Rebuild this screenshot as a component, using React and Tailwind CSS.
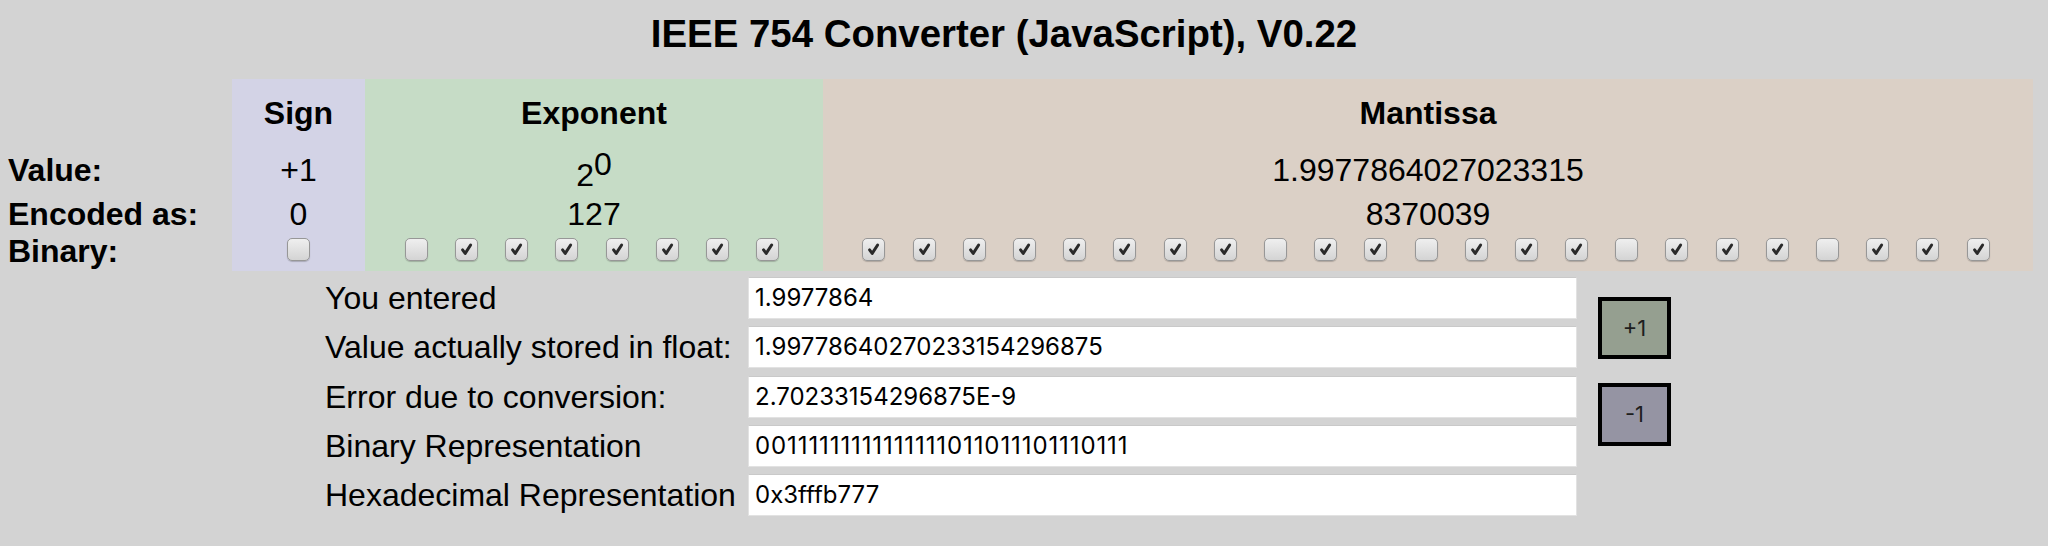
import React from "react";

const SIGN = "0";
const EXPONENT = "01111111";
const MANTISSA = "11111111011011101110111";

// Aqua-style checkbox, as drawn by the browser in the reference
function Bit({ on }) {
  return (
    <span className="inline-flex h-[23px] w-[23px] shrink-0 items-center justify-center rounded-[5px] border border-[#979797] bg-linear-to-b from-[#efefef] to-[#d4d4d4] shadow-[0_1px_1px_rgba(0,0,0,0.2)]">
      {on && (
        <svg viewBox="0 0 16 16" className="h-[15px] w-[15px]">
          <path
            d="M3.8 8.4 L6.6 12.2 L12.4 3.2"
            fill="none"
            stroke="#2a2a2a"
            strokeWidth="3.2"
            strokeLinecap="round"
            strokeLinejoin="round"
          />
        </svg>
      )}
    </span>
  );
}

function Bits({ value }) {
  return (
    <div className="flex h-full items-center justify-center gap-[27.2px]">
      {value.split("").map((b, i) => (
        <Bit key={i} on={b === "1"} />
      ))}
    </div>
  );
}

const rows = [
  ["You entered", "1.9977864", ""],
  ["Value actually stored in float:", "1.99778640270233154296875", ""],
  ["Error due to conversion:", "2.70233154296875E-9", ""],
  ["Binary Representation", "00111111111111111011011101110111", "tracking-[0.9px]"],
  ["Hexadecimal Representation", "0x3fffb777", ""],
];

export default function App() {
  return (
    <div className="min-h-screen bg-[#d3d3d3] font-['Liberation_Sans',Arial,sans-serif] text-black">
      {/* Title */}
      <h1 className="pt-[12px] pr-[40px] text-center text-[38.4px] font-bold leading-[44px]">
        IEEE 754 Converter (JavaScript), V0.22
      </h1>

      {/* Bit table */}
      <div className="mt-[23px] ml-[8px] grid grid-cols-[224px_133px_458px_1210px] text-[32px] leading-[37px]">
        {/* header */}
        <div className="h-[58px]" />
        <div className="h-[58px] bg-[#d3d3e6] pt-[16px] text-center font-bold">Sign</div>
        <div className="h-[58px] bg-[#c6dcc6] pt-[16px] text-center font-bold">Exponent</div>
        <div className="h-[58px] bg-[#dbd0c6] pt-[16px] text-center font-bold">Mantissa</div>

        {/* value */}
        <div className="h-[57px] pt-[15px] font-bold">Value:</div>
        <div className="h-[57px] bg-[#d3d3e6] pt-[15px] text-center">+1</div>
        <div className="h-[57px] bg-[#c6dcc6] pt-[15px] text-center">
          <span className="relative top-[5px]">
            2<sup className="relative -top-[11px] text-[32px]">0</sup>
          </span>
        </div>
        <div className="h-[57px] bg-[#dbd0c6] pt-[15px] text-center">1.9977864027023315</div>

        {/* encoded */}
        <div className="h-[37px] pt-[2px] font-bold">Encoded as:</div>
        <div className="h-[37px] bg-[#d3d3e6] pt-[2px] text-center">0</div>
        <div className="h-[37px] bg-[#c6dcc6] pt-[2px] text-center">127</div>
        <div className="h-[37px] bg-[#dbd0c6] pt-[2px] text-center">8370039</div>

        {/* binary */}
        <div className="h-[40px] pt-[2px] font-bold">Binary:</div>
        <div className="h-[40px] bg-[#d3d3e6] pb-[3px]">
          <Bits value={SIGN} />
        </div>
        <div className="h-[40px] bg-[#c6dcc6] pb-[3px] pr-[4px]">
          <Bits value={EXPONENT} />
        </div>
        <div className="h-[40px] bg-[#dbd0c6] pb-[3px] pr-[4px]">
          <Bits value={MANTISSA} />
        </div>
      </div>

      {/* Results */}
      <div className="mt-[6px] flex pl-[325px]">
        <div className="flex flex-col gap-[7.25px]">
          {rows.map(([label, value, extra]) => (
            <div key={label} className="flex h-[42px] items-start">
              <div className="w-[423px] pt-[3px] text-[32px] leading-[37px]">{label}</div>
              <div
                className={`flex h-[42px] w-[829px] items-center border border-[#e2e2e2] border-t-[#c9c9c9] bg-white pl-[6px] font-['Inter',sans-serif] text-[24px] text-black ${extra}`}
              >
                {value}
              </div>
            </div>
          ))}
        </div>

        <div className="ml-[21px] flex flex-col gap-[24px] pt-[20px]">
          <button className="flex h-[62px] w-[73px] items-center justify-center border-[4px] border-black bg-[#959f90] font-['Inter',sans-serif] text-[22px] text-[#1e1e1e]">
            +1
          </button>
          <button className="flex h-[63px] w-[73px] items-center justify-center border-[4px] border-black bg-[#9594a3] font-['Inter',sans-serif] text-[22px] text-[#1e1e1e]">
            -1
          </button>
        </div>
      </div>
    </div>
  );
}
